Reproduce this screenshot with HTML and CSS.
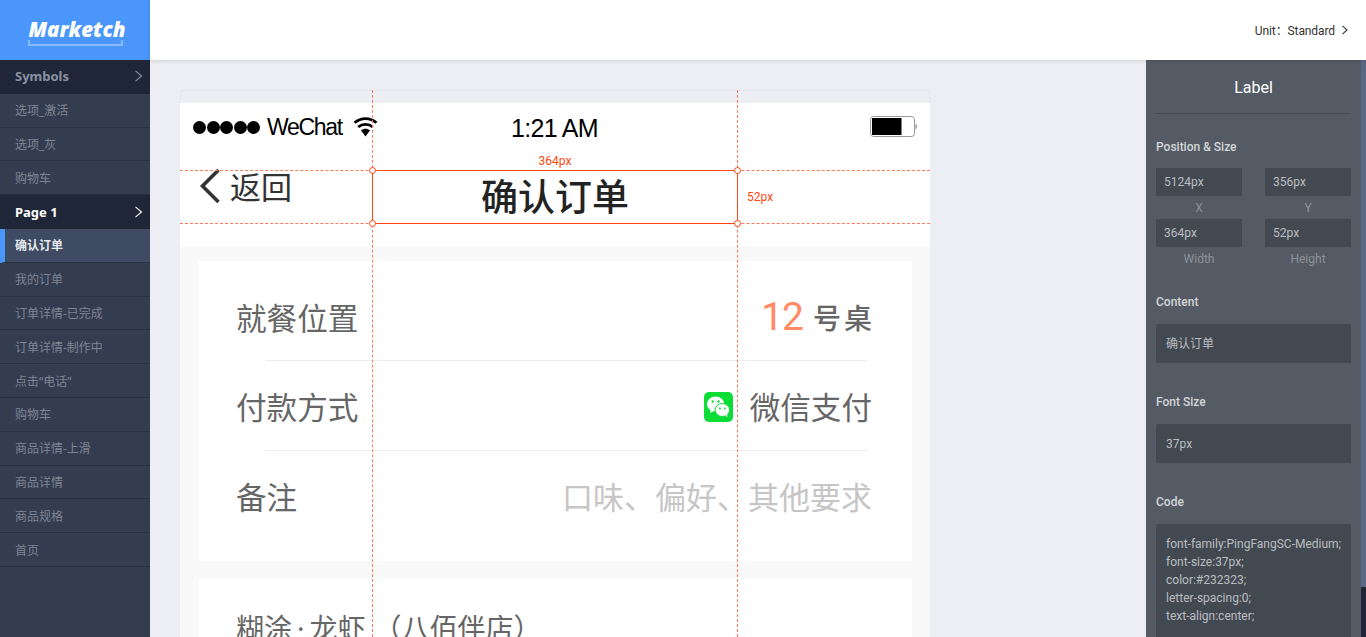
FILE: index.html
```html
<!DOCTYPE html>
<html lang="zh-CN">
<head>
    <meta charset="UTF-8">
    <title>Marketch</title>
    <link rel="stylesheet" href="styles.css">
</head>
<body>
    <div class="app">
        <div class="sidebar">
            <div class="logo">
                <span class="logo-text">Marketch</span>
                <span class="logo-ruler"></span>
            </div>
            <div class="menu-group">Symbols
                <svg class="chevron" width="9" height="12" viewBox="0 0 9 12"><path d="M1.5 .8 7.5 6 1.5 11.2" fill="none" stroke="currentColor" stroke-width="1.1"/></svg>
            </div>
            <div class="menu-item">选项_激活</div>
            <div class="menu-item">选项_灰</div>
            <div class="menu-item">购物车</div>
            <div class="menu-group current">Page 1
                <svg class="chevron" width="9" height="12" viewBox="0 0 9 12"><path d="M1.5 .8 7.5 6 1.5 11.2" fill="none" stroke="currentColor" stroke-width="1.1"/></svg>
            </div>
            <div class="menu-item active">确认订单</div>
            <div class="menu-item">我的订单</div>
            <div class="menu-item">订单详情-已完成</div>
            <div class="menu-item">订单详情-制作中</div>
            <div class="menu-item">点击“电话”</div>
            <div class="menu-item">购物车</div>
            <div class="menu-item">商品详情-上滑</div>
            <div class="menu-item">商品详情</div>
            <div class="menu-item">商品规格</div>
            <div class="menu-item">首页</div>
        </div>

        <div class="main">
            <div class="topbar">
                <span class="unit">Unit：Standard</span>
                <svg width="8" height="10" viewBox="0 0 8 10"><path d="M1.5 .8 6 5 1.5 9.2" fill="none" stroke="#333" stroke-width="1.1"/></svg>
            </div>
            <div class="workspace">
                <div class="canvas">
                    <div class="artboard">
                        <div class="screen-head">
                            <div class="status">
                                <div class="signal"><i></i><i></i><i></i><i></i><i></i></div>
                                <span class="carrier">WeChat</span>
                                <svg class="wifi" width="25" height="21" viewBox="0 0 24 20">
                                    <path d="M1.5 6.5C7.5 1 16.5 1 22.5 6.5M5 10.5C9 7 15 7 19 10.5" fill="none" stroke="#000" stroke-width="2.6"/>
                                    <path d="M7.6 13.6C10.2 11.6 13.8 11.6 16.4 13.6L12 19.5Z" fill="#000"/>
                                </svg>
                                <span class="clock">1:21 AM</span>
                                <svg class="battery" width="47" height="22" viewBox="0 0 47 22">
                                    <rect x=".5" y=".5" width="44" height="20" rx="3" fill="#fff" stroke="#999"/>
                                    <rect x="2" y="2" width="29.500" height="17" fill="#000"/>
                                    <path d="M45.500 7.500C46.500 8 47 9.500 47 10.500S46.500 13 45.500 13.500Z" fill="#999"/>
                                </svg>
                            </div>
                            <div class="nav">
                                <svg class="back-icon" width="22" height="36" viewBox="0 0 22 36"><path d="M19.500 2 3.500 18 19.500 34" fill="none" stroke="#333" stroke-width="3.600"/></svg>
                                <span class="back-text">返回</span>
                                <span class="nav-title">确认订单</span>
                            </div>
                        </div>
                        <div class="screen-body">
                            <div class="card">
                                <div class="row">
                                    <span>就餐位置</span>
                                    <span class="table-no"><b>12</b>号桌</span>
                                </div>
                                <div class="sep"></div>
                                <div class="row">
                                    <span>付款方式</span>
                                    <span class="pay">
                                        <svg width="29" height="30" viewBox="0 0 30 30" preserveAspectRatio="none">
                                            <rect width="30" height="30" rx="5" fill="#0bdc36"/>
                                            <ellipse cx="12" cy="12" rx="9" ry="7.500" fill="#fff"/>
                                            <path d="M7 17 6.500 21 11 18.500Z" fill="#fff"/>
                                            <ellipse cx="19" cy="18" rx="7.500" ry="6.500" fill="#fff" stroke="#0bdc36"/>
                                            <path d="M22 23 24 25.500 24 21.500Z" fill="#fff"/>
                                            <circle cx="9" cy="9.500" r="1.200" fill="#0bdc36"/>
                                            <circle cx="15" cy="9.500" r="1.200" fill="#0bdc36"/>
                                            <circle cx="16.500" cy="16.500" r="1" fill="#0bdc36"/>
                                            <circle cx="21.500" cy="16.500" r="1" fill="#0bdc36"/>
                                        </svg>
                                        微信支付
                                    </span>
                                </div>
                                <div class="sep"></div>
                                <div class="row">
                                    <span>备注</span>
                                    <span class="hint">口味、偏好、其他要求</span>
                                </div>
                            </div>
                            <div class="card shop">
                                <div class="row">
                                    <span>糊涂<span class="mid">·</span>龙虾<span class="branch">（八佰伴店）</span></span>
                                </div>
                            </div>
                        </div>

                        <!-- guides over the selected layer -->
                        <div class="guide-v guide-left"></div>
                        <div class="guide-v guide-right"></div>
                        <div class="guide-h guide-top"></div>
                        <div class="guide-h guide-bottom"></div>
                        <div class="selection">
                            <i class="dot tl"></i><i class="dot tr"></i><i class="dot bl"></i><i class="dot br"></i>
                            <span class="size-w">364px</span>
                            <span class="size-h">52px</span>
                        </div>
                    </div>
                </div>

                <div class="panel">
                    <h2>Label</h2>
                    <h3 class="first">Position &amp; Size</h3>
                    <div class="fields">
                        <div class="field"><div class="value">5124px</div><span>X</span></div>
                        <div class="field"><div class="value">356px</div><span>Y</span></div>
                        <div class="field"><div class="value">364px</div><span>Width</span></div>
                        <div class="field"><div class="value">52px</div><span>Height</span></div>
                    </div>
                    <h3 class="after-fields">Content</h3>
                    <div class="box">确认订单</div>
                    <h3>Font Size</h3>
                    <div class="box">37px</div>
                    <h3>Code</h3>
                    <div class="box code">font-family:PingFangSC-Medium;<br>font-size:37px;<br>color:#232323;<br>letter-spacing:0;<br>text-align:center;</div>
                </div>
                <div class="scroll-strip"><div class="scroll-thumb"></div></div>
            </div>
        </div>
    </div>
</body>
</html>
```

FILE: styles.css
```css
* {
    box-sizing: border-box;
}

html, body {
    margin: 0;
    height: 637px;
    overflow: hidden;
}

body {
    font-family: "Noto Sans", "Noto Sans CJK SC", sans-serif;
    font-size: 12px;
    color: #333;
}

.app {
    display: flex;
    height: 637px;
}

/* sidebar */
.sidebar {
    width: 150px;
    flex: none;
    background-color: #343c4f;
}

.logo {
    height: 60px;
    background-color: #4a96fb;
    display: flex;
    flex-direction: column;
    align-items: center;
    padding-top: 16px;
}

.logo-text {
    font-family: "Open Sans", sans-serif;
    font-size: 20.500px;
    line-height: 27px;
    font-weight: 800;
    font-style: italic;
    color: #fff;
    margin-left: 4px;
}

.logo-ruler {
    width: 95px;
    height: 6px;
    border: solid rgba(255, 255, 255, 0.35);
    border-width: 0 2px 2px;
    position: relative;
    top: -3px;
}

.menu-group {
    height: 33.8px;
    display: flex;
    align-items: center;
    justify-content: space-between;
    padding: 0 7px 1px 15px;
    background-color: #1f2637;
    color: #8a92a3;
    font-weight: 700;
    font-size: 13px;
}

.menu-group.current {
    color: #fff;
}

.menu-item {
    height: 33.8px;
    display: flex;
    align-items: center;
    padding-left: 15px;
    border-bottom: 1px solid #2a3142;
    color: #7e8594;
}

.menu-item.active {
    background-color: #3f4a63;
    border-left: 5px solid #4a96fb;
    padding: 0 0 1px 10px;
    color: #e8eaee;
    font-weight: 700;
}

/* top bar */
.main {
    flex: 1;
    min-width: 0;
    display: flex;
    flex-direction: column;
}

.topbar {
    height: 60px;
    flex: none;
    display: flex;
    align-items: center;
    justify-content: flex-end;
    gap: 6px;
    padding-right: 17px;
    background-color: #fff;
    box-shadow: 0 1px 4px rgba(0, 0, 0, 0.12);
    position: relative;
    z-index: 2;
    font-family: Roboto, "Noto Sans CJK SC", sans-serif;
}

.unit {
    letter-spacing: -0.1px;
    margin-bottom: 2px;
}

.workspace {
    flex: 1;
    min-height: 0;
    display: flex;
}

/* artboard */
.canvas {
    flex: 1;
    min-width: 0;
    background-color: #eceef3;
    padding: 30px 0 0 30px;
    overflow: hidden;
}

.artboard {
    width: 750px;
    height: 547px;
    padding-top: 13px;
    position: relative;
    overflow: hidden;
    box-shadow: inset 0 0 0 1px #e4e7ee;
}

.screen-head {
    height: 143px;
    background-color: #fff;
}

.status {
    height: 48px;
    display: flex;
    align-items: center;
    padding: 0 13px;
    position: relative;
    font-family: "Liberation Sans", sans-serif;
    color: #000;
}

.signal {
    display: flex;
    gap: 0.5px;
}

.signal i {
    width: 13px;
    height: 13px;
    border-radius: 50%;
    background-color: #000;
}

.carrier {
    font-size: 23px;
    letter-spacing: -1.3px;
    margin-left: 7px;
}

.wifi {
    margin: -2px 0 0 11px;
}

.clock {
    position: absolute;
    left: 331px;
    top: 11px;
    font-size: 25px;
    letter-spacing: -0.7px;
}

.battery {
    margin-left: auto;
}

.nav {
    height: 54px;
    margin-top: 19px;
    display: flex;
    align-items: flex-start;
    position: relative;
    padding-left: 19px;
}

.back-icon {
    flex: none;
    margin-top: -2px;
}

.back-text {
    font-size: 31px;
    line-height: 36px;
    margin: -1px 0 0 9px;
    color: #333;
}

.nav-title {
    position: absolute;
    left: 0;
    right: 0;
    top: 0;
    text-align: center;
    line-height: 54px;
    font-size: 37px;
    font-weight: 500;
    color: #232323;
}

.screen-body {
    background-color: #f9f9f9;
    padding: 15px 18px 0 19px;
    height: 500px;
}

.card {
    background-color: #fff;
    height: 300px;
    padding-top: 13px;
    color: #666;
    font-size: 30.600px;
}

.card.shop {
    margin-top: 18px;
    height: 200px;
    padding-top: 5px;
    font-size: 28px;
}

.mid {
    margin: 0 5px;
}

.branch {
    margin-left: 8px;
}

.row {
    height: 86px;
    display: flex;
    align-items: center;
    justify-content: space-between;
    padding: 0 40px 0 37px;
}

.sep {
    height: 1px;
    margin: 0 45px 0 66px;
    background-color: #ececec;
}

.sep + .row {
    height: 89px;
}

.table-no {
    font-size: 28px;
    font-weight: 500;
    letter-spacing: 3px;
    margin-right: -3px;
    display: flex;
    align-items: center;
}

.table-no b {
    font-family: Roboto, sans-serif;
    font-size: 39px;
    font-weight: 400;
    letter-spacing: -1px;
    color: #ff8a65;
    margin-right: 10px;
}

.pay {
    display: flex;
    align-items: center;
    gap: 17px;
}

.pay svg {
    margin-top: 3px;
}

.hint {
    font-size: 31px;
    color: #c6c6c6;
}

/* guides */
.guide-v {
    position: absolute;
    top: 0;
    bottom: 0;
    border-left: 1px dashed #ff7a5c;
}

.guide-h {
    position: absolute;
    left: 0;
    right: 0;
    border-top: 1px dashed #ff7a5c;
}

.guide-left { left: 192px; }
.guide-right { left: 557px; }
.guide-top { top: 80px; }
.guide-bottom { top: 133px; }

.selection {
    position: absolute;
    left: 192px;
    top: 80px;
    width: 366px;
    height: 54px;
    border: 1px solid #ff4510;
}

.dot {
    position: absolute;
    width: 7px;
    height: 7px;
    border: 1px solid #ff4510;
    border-radius: 50%;
    background-color: #fff;
}

.tl { left: -4px; top: -4px; }
.tr { right: -4px; top: -4px; }
.bl { left: -4px; bottom: -4px; }
.br { right: -4px; bottom: -4px; }

.size-w, .size-h {
    position: absolute;
    font-family: Roboto, sans-serif;
    font-size: 12px;
    line-height: 16px;
    color: #ff4510;
}

.size-w {
    left: 0;
    right: 0;
    top: -18px;
    text-align: center;
}

.size-h {
    left: 374px;
    top: 18px;
}

/* right panel */
.panel {
    width: 215px;
    flex: none;
    padding: 0 10px;
    background-color: #545b64;
    color: #c9ccd0;
    overflow: hidden;
    font-family: Roboto, "Noto Sans CJK SC", sans-serif;
}

.panel h2 {
    margin: 0;
    height: 54px;
    line-height: 55px;
    text-align: center;
    font-size: 16px;
    font-weight: 400;
    color: #fff;
    border-bottom: 1px solid #454b53;
}

.panel h3 {
    margin: 31px 0 14px;
    height: 16px;
    font-size: 12px;
    line-height: 17px;
    font-weight: 500;
    color: #d2d5d8;
}

.panel h3.first {
    margin-top: 25px;
    margin-bottom: 13px;
}

.panel h3.after-fields {
    margin-top: 24px;
}

.fields {
    display: grid;
    grid-template-columns: 86px 86px;
    justify-content: space-between;
}

.field {
    height: 51px;
}

.field span {
    display: block;
    text-align: center;
    line-height: 24px;
    color: #8d9299;
}

.value {
    height: 28px;
    line-height: 29px;
    padding-left: 8px;
    background-color: #434950;
    color: #b9bdc2;
}

.box {
    height: 39px;
    line-height: 40px;
    padding-left: 10px;
    background-color: #434950;
    border-radius: 2px 0 0 2px;
    color: #b9bdc2;
}

.box.code {
    height: 140px;
    padding-top: 11px;
    line-height: 18px;
    white-space: nowrap;
}

.scroll-strip {
    width: 5px;
    flex: none;
    background-color: #1f2536;
}

.scroll-thumb {
    height: 527px;
    background-color: #5b6784;
}
```
